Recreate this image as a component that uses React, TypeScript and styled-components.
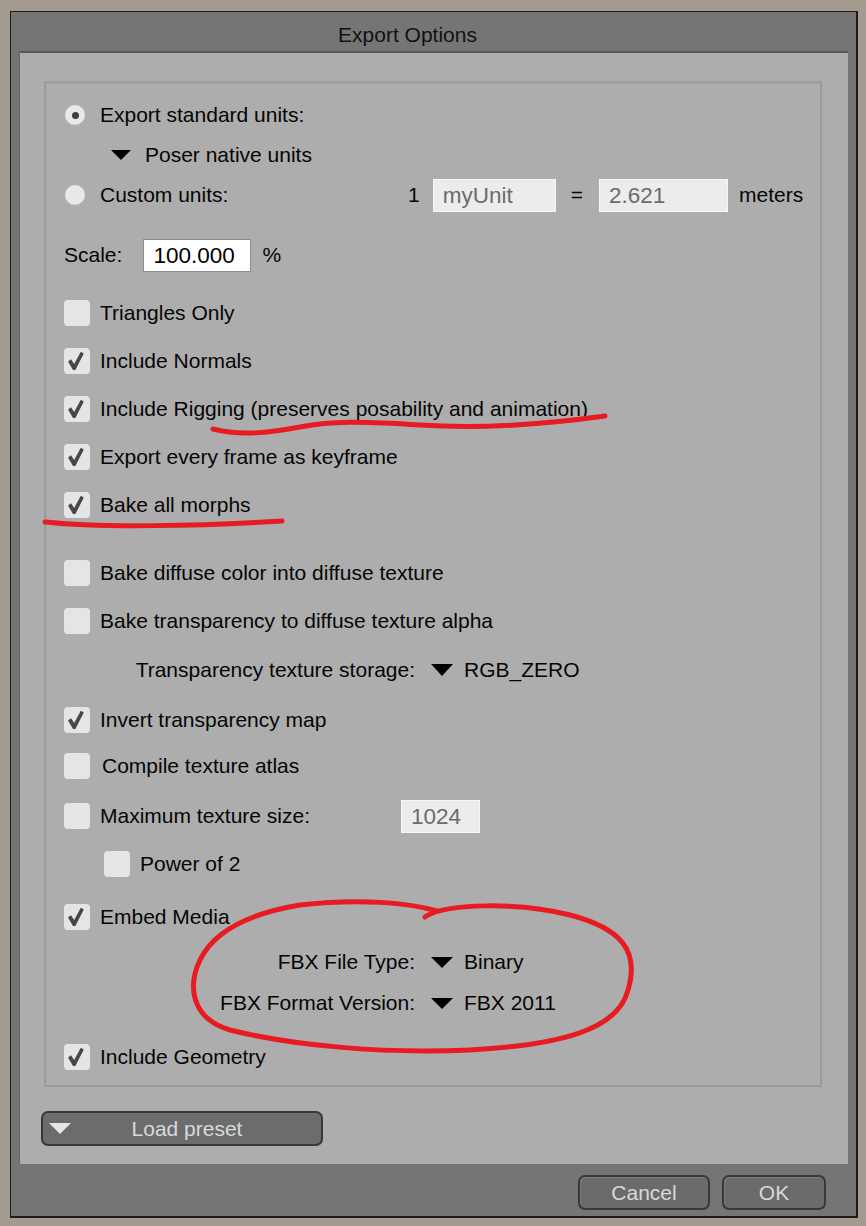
import styled, { createGlobalStyle } from 'styled-components';

const GlobalStyle = createGlobalStyle`
  html, body {
    margin: 0;
    padding: 0;
    background: #a39b90;
  }
  body {
    font-family: 'Liberation Sans', Arial, sans-serif;
    color: #050505;
  }
`;

// check mark drawn inside the light checkbox
const CheckMark = () => (
  <svg width="26" height="26" viewBox="0 0 26 26">
    <polygon
      points="4,13.5 7,11.2 10.2,16 16.8,3.8 19.8,5.6 11.4,22 9,22"
      fill="#474747"
    />
  </svg>
);

const Checkbox = ({ checked }: { checked?: boolean }) => (
  <Box>{checked && <CheckMark />}</Box>
);

const App = () => {
  return (
    <Page>
      <GlobalStyle />
      <Dialog>
        <TitleBar>Export Options</TitleBar>
        <Body>
          <Group>
            <Row>
              <Radio $on />
              <RadioLabel>Export standard units:</RadioLabel>
            </Row>
            <Row $mt={6} $indent={47}>
              <Arrow $w={20} $h={10} />
              <ArrowValue $gap={14}>Poser native units</ArrowValue>
            </Row>
            <Row $mt={6}>
              <Radio />
              <RadioLabel $w={308}>Custom units:</RadioLabel>
              <Plain>1</Plain>
              <Field $w={123} $ml={13} readOnly value="myUnit" />
              <Plain $ml={15}>=</Plain>
              <Field $w={129} $ml={16} readOnly value="2.621" />
              <Plain $ml={11}>meters</Plain>
            </Row>
            <Row $mt={26} $indent={-1}>
              <Plain>Scale:</Plain>
              <Field $w={108} $ml={21} $white readOnly value="100.000" />
              <Plain $ml={11}>%</Plain>
            </Row>
            <Row $mt={24}>
              <Checkbox />
              <Label>Triangles Only</Label>
            </Row>
            <Row $mt={14}>
              <Checkbox checked />
              <Label>Include Normals</Label>
            </Row>
            <Row $mt={14}>
              <Checkbox checked />
              <Label>Include Rigging (preserves posability and animation)</Label>
            </Row>
            <Row $mt={14}>
              <Checkbox checked />
              <Label>Export every frame as keyframe</Label>
            </Row>
            <Row $mt={14}>
              <Checkbox checked />
              <Label>Bake all morphs</Label>
            </Row>
            <Row $mt={34}>
              <Checkbox />
              <Label>Bake diffuse color into diffuse texture</Label>
            </Row>
            <Row $mt={14}>
              <Checkbox />
              <Label>Bake transparency to diffuse texture alpha</Label>
            </Row>
            <DropRow $mt={15}>
              <DropLabel>Transparency texture storage:</DropLabel>
              <Arrow $w={23} $h={12} />
              <ArrowValue $gap={11}>RGB_ZERO</ArrowValue>
            </DropRow>
            <Row $mt={16}>
              <Checkbox checked />
              <Label>Invert transparency map</Label>
            </Row>
            <Row $mt={12}>
              <Checkbox />
              <Label $ml={12}>Compile texture atlas</Label>
            </Row>
            <Row $mt={16}>
              <Checkbox />
              <Label $w={301}>Maximum texture size:</Label>
              <Field $w={79} readOnly value="1024" />
            </Row>
            <Row $mt={14} $indent={40}>
              <Checkbox />
              <Label>Power of 2</Label>
            </Row>
            <Row $mt={19}>
              <Checkbox checked />
              <Label>Embed Media</Label>
            </Row>
            <DropRow $mt={11}>
              <DropLabel>FBX File Type:</DropLabel>
              <Arrow $w={23} $h={11} />
              <ArrowValue $gap={11}>Binary</ArrowValue>
            </DropRow>
            <DropRow $mt={7}>
              <DropLabel>FBX Format Version:</DropLabel>
              <Arrow $w={23} $h={11} />
              <ArrowValue $gap={11}>FBX 2011</ArrowValue>
            </DropRow>
            <Row $mt={20}>
              <Checkbox checked />
              <Label>Include Geometry</Label>
            </Row>
          </Group>
          <PresetButton>
            <PresetArrow />
            Load preset
          </PresetButton>
        </Body>
        <Footer>
          <DialogButton $w={132}>Cancel</DialogButton>
          <DialogButton $w={104}>OK</DialogButton>
        </Footer>
      </Dialog>

      {/* red pen marks drawn over the dialog */}
      <Marks width="866" height="1226" viewBox="0 0 866 1226">
        <path d="M 213 429 C 240 436, 268 433, 300 427 S 360 421, 420 425 S 540 425, 605 416" />
        <path d="M 45 522 C 100 528, 200 526, 282 521" />
        <path d="M 425 917 C 445 903, 520 902, 570 915 C 620 928, 640 950, 628 990 C 618 1030, 560 1045, 470 1050 C 380 1054, 290 1045, 230 1030 C 190 1018, 188 985, 200 960 C 212 935, 240 915, 300 905 C 360 898, 410 903, 437 911" />
      </Marks>
    </Page>
  );
};

export default App;

const Page = styled.div`
  position: relative;
  width: 866px;
  height: 1226px;
  padding: 11px 0 0 10px;
  box-sizing: border-box;
`;

const Dialog = styled.div`
  width: 848px;
  height: 1207px;
  box-sizing: border-box;
  border: 1px solid #1c1c1c;
  border-right-width: 2px;
  border-bottom-width: 2px;
  background: #757575;
  display: flex;
  flex-direction: column;
`;

const TitleBar = styled.div`
  height: 39px;
  box-sizing: border-box;
  padding: 6px 52px 0 0;
  line-height: 33px;
  text-align: center;
  font-size: 21px;
  color: #111;
`;

const Body = styled.div`
  flex: 1;
  margin: 0 8px 0 8px;
  background: #adadad;
  border-top: 2px solid #585858;
  border-left: 1px solid #686868;
  display: flex;
  flex-direction: column;
  padding: 28px 26px 18px 24px;
  box-sizing: border-box;
`;

const Group = styled.div`
  border: 2px solid #9c9c9c;
  box-shadow: inset 1px 1px 0 #a6a6a6;
  padding: 15px 0 11px 18px;
  display: flex;
  flex-direction: column;
`;

const Row = styled.div<{ $mt?: number; $indent?: number }>`
  height: 34px;
  display: flex;
  align-items: center;
  margin-top: ${(p) => p.$mt || 0}px;
  padding-left: ${(p) => p.$indent || 0}px;
  font-size: 21px;
  white-space: nowrap;
`;

const DropRow = styled(Row)``;

const DropLabel = styled.span`
  width: 367px;
  box-sizing: border-box;
  text-align: right;
  padding-right: 16px;
`;

const Box = styled.div`
  width: 26px;
  height: 26px;
  border-radius: 4px;
  background: #e5e5e5;
  flex: none;
`;

const Radio = styled.div<{ $on?: boolean }>`
  width: 20px;
  height: 20px;
  margin-left: 1px;
  border-radius: 50%;
  background: #e8e8e8;
  flex: none;
  display: flex;
  align-items: center;
  justify-content: center;

  &::after {
    content: '';
    width: 7px;
    height: 7px;
    border-radius: 50%;
    background: ${(p) => (p.$on ? '#3e3e3e' : 'transparent')};
  }
`;

const RadioLabel = styled.span<{ $w?: number }>`
  margin-left: 15px;
  ${(p) => (p.$w ? `width: ${p.$w}px;` : '')}
`;

const Label = styled.span<{ $w?: number; $ml?: number }>`
  margin-left: ${(p) => p.$ml ?? 10}px;
  ${(p) => (p.$w ? `width: ${p.$w}px;` : '')}
`;

const Plain = styled.span<{ $ml?: number }>`
  margin-left: ${(p) => p.$ml || 0}px;
`;

const Arrow = styled.div<{ $w: number; $h: number }>`
  width: 0;
  height: 0;
  border-left: ${(p) => p.$w / 2}px solid transparent;
  border-right: ${(p) => p.$w / 2}px solid transparent;
  border-top: ${(p) => p.$h}px solid #000;
  flex: none;
`;

const ArrowValue = styled.span<{ $gap: number }>`
  margin-left: ${(p) => p.$gap}px;
`;

const Field = styled.input<{ $w: number; $ml?: number; $white?: boolean }>`
  width: ${(p) => p.$w}px;
  height: 33px;
  margin: 0 0 0 ${(p) => p.$ml || 0}px;
  box-sizing: border-box;
  padding: 2px 9px 0;
  font-family: 'Liberation Sans', Arial, sans-serif;
  font-size: 22.5px;
  background: ${(p) => (p.$white ? '#ffffff' : '#ececec')};
  border: 1px solid ${(p) => (p.$white ? '#8c8c8c' : '#f7f7f7')};
  color: ${(p) => (p.$white ? '#000' : '#6b6b6b')};
  outline: none;
`;

const PresetButton = styled.button`
  position: relative;
  margin: 24px 0 0 -3px;
  width: 282px;
  height: 35px;
  box-sizing: border-box;
  border: 2px solid #383838;
  border-radius: 7px;
  background: #6c6c6c;
  color: #d6dadd;
  font-family: 'Liberation Sans', Arial, sans-serif;
  font-size: 21px;
  padding: 0 0 0 10px;
  display: flex;
  align-items: center;
  justify-content: center;
`;

const PresetArrow = styled.span`
  position: absolute;
  left: 6px;
  top: 10px;
  width: 0;
  height: 0;
  border-left: 11px solid transparent;
  border-right: 11px solid transparent;
  border-top: 11px solid #e4e6e8;
`;

const Footer = styled.div`
  height: 53px;
  box-sizing: border-box;
  display: flex;
  justify-content: flex-end;
  align-items: flex-start;
  gap: 12px;
  padding: 11px 30px 0 0;
`;

const DialogButton = styled.button<{ $w: number }>`
  width: ${(p) => p.$w}px;
  height: 35px;
  box-sizing: border-box;
  border: 2px solid #383838;
  border-radius: 7px;
  background: #6b6b6b;
  box-shadow: inset 1px 1px 0 #7d7d7d;
  color: #d6d9db;
  font-family: 'Liberation Sans', Arial, sans-serif;
  font-size: 21px;
  padding: 0;
`;

const Marks = styled.svg`
  position: absolute;
  left: 0;
  top: 0;
  pointer-events: none;

  path {
    fill: none;
    stroke: #e81b22;
    stroke-width: 5;
    stroke-linecap: round;
    stroke-linejoin: round;
  }
`;
